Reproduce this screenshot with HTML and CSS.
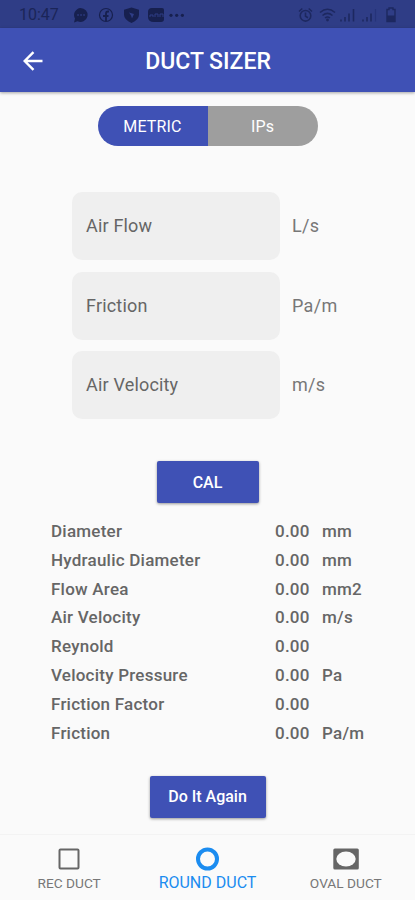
FILE: index.html
```html
<!DOCTYPE html>
<html lang="en">
<head>
    <meta charset="UTF-8">
    <meta name="viewport" content="width=device-width, initial-scale=1.0">
    <title>Duct Sizer</title>
    <link rel="stylesheet" href="styles.css">
</head>
<body>
    <div class="status-bar">
        <span class="clock">10:47</span>
        <svg class="status-left" width="114" height="20" viewBox="0 0 114 20">
            <path d="M7.500 3a7 7 0 1 1-3 13.300L1 17.500l1-4A7 7 0 0 1 7.500 3z" fill="#17204f"/>
            <path d="M4.300 10h1.500M7.300 10h1.500M10.300 10h1.500" stroke="#2f3d86" stroke-width="1.500"/>
            <circle cx="33" cy="10" r="6.500" fill="none" stroke="#17204f" stroke-width="1.200"/>
            <path d="M36 6.500h-1q-2 0-2 2V16M30 11h5.500" fill="none" stroke="#17204f" stroke-width="1.800"/>
            <path d="M58.500 2.500l7.500 2.300v5q0 5-7.500 8.200q-7.500-3.200-7.500-8.200v-5z" fill="#17204f"/>
            <path d="M56 7.500l5 1.500-2 4.500-1-3z" fill="#2f3d86"/>
            <path d="M79 3h10q2 0 2 2v9q0 3-3 3h-7q-6 0-6-5V7q0-4 4-4z" fill="#17204f"/>
            <path d="M77 12v-2h3v2M82 12V9h3v3M87 12V9h3v3" fill="none" stroke="#2f3d86"/>
            <circle cx="98" cy="10.300" r="1.600" fill="#17204f"/>
            <circle cx="103.700" cy="10.300" r="1.600" fill="#17204f"/>
            <circle cx="109.400" cy="10.300" r="1.600" fill="#17204f"/>
        </svg>
        <svg class="status-right" width="100" height="20" viewBox="0 0 100 20">
            <g fill="none" stroke="#1d2860" stroke-width="1.600">
                <circle cx="7.500" cy="10.800" r="5.300"/>
                <path d="M7.500 7.500v3.700l2.500 1.500M1 6.500l3.300-3M14 6.500l-3.300-3"/>
                <path d="M22 7.500q7.500-6.500 15 0M24.500 10.500q5-4.300 10 0M27 13q2.500-2 5 0"/>
            </g>
            <circle cx="29.500" cy="15" r="1.400" fill="#1d2860"/>
            <path d="M43 14.500v2M47 12v4.500M51 8.500v8M55.500 4v12.500M65 14.500v2M69 12v4.500M73 8.500v8" stroke="#1d2860" stroke-width="1.600"/>
            <path d="M77.500 4v12.500" stroke="#26337a" stroke-width="1.200"/>
            <path d="M89 4.500h2V3h4v1.500h2v12h-8z" fill="none" stroke="#1d2860" stroke-width="1.400"/>
            <path d="M89 10.500h8v6h-8z" fill="#1d2860"/>
        </svg>
    </div>

    <header class="app-bar">
        <svg class="back" width="20" height="20" viewBox="0 0 20 20">
            <path d="M19.500 10H2M10.500 1.200L1.700 10l8.800 8.800" fill="none" stroke="#fff" stroke-width="2.400"/>
        </svg>
        <h1>DUCT SIZER</h1>
    </header>

    <main>
        <div class="unit-toggle">
            <button class="unit active">METRIC</button>
            <button class="unit">IPs</button>
        </div>

        <div class="fields">
            <div class="field">
                <div class="input">Air Flow</div>
                <span class="field-unit">L/s</span>
            </div>
            <div class="field">
                <div class="input">Friction</div>
                <span class="field-unit">Pa/m</span>
            </div>
            <div class="field">
                <div class="input">Air Velocity</div>
                <span class="field-unit">m/s</span>
            </div>
        </div>

        <button class="action calculate">CAL</button>

        <div class="results">
            <span>Diameter</span><span>0.00</span><span>mm</span>
            <span>Hydraulic Diameter</span><span>0.00</span><span>mm</span>
            <span>Flow Area</span><span>0.00</span><span>mm2</span>
            <span>Air Velocity</span><span>0.00</span><span>m/s</span>
            <span>Reynold</span><span>0.00</span><span></span>
            <span>Velocity Pressure</span><span>0.00</span><span>Pa</span>
            <span>Friction Factor</span><span>0.00</span><span></span>
            <span>Friction</span><span>0.00</span><span>Pa/m</span>
        </div>

        <button class="action again">Do It Again</button>
    </main>

    <nav class="tabs">
        <div class="tab">
            <svg width="28" height="24" viewBox="0 0 28 24">
                <rect x="4.500" y="2.500" width="19" height="19" rx="1" fill="none" stroke="#666" stroke-width="2"/>
            </svg>
            <span>REC DUCT</span>
        </div>
        <div class="tab selected">
            <svg width="28" height="24" viewBox="0 0 28 24">
                <circle cx="14.500" cy="12" r="9.500" fill="none" stroke="#1b8cf0" stroke-width="4"/>
            </svg>
            <span>ROUND DUCT</span>
        </div>
        <div class="tab">
            <svg width="28" height="24" viewBox="0 0 28 24">
                <rect x="1.300" y="1.500" width="25.500" height="21" rx="1.500" fill="#666"/>
                <ellipse cx="14" cy="12" rx="9.700" ry="7.500" fill="#fafafa"/>
            </svg>
            <span>OVAL DUCT</span>
        </div>
    </nav>
</body>
</html>
```

FILE: styles.css
```css
* {
    box-sizing: border-box;
}

body {
    margin: 0;
    height: 900px;
    display: flex;
    flex-direction: column;
    overflow: hidden;
    background-color: #fafafa;
    color: #666;
    font-family: Roboto, "Liberation Sans", sans-serif;
}

button {
    border: none;
    padding: 0;
    color: white;
    font-family: inherit;
}

.status-bar {
    flex: none;
    display: flex;
    align-items: center;
    height: 28px;
    padding: 1px 17px 0 19px;
    background-color: #2f3d86;
}

.clock {
    width: 54px;
    color: #1b2558;
    font-size: 16px;
}

.status-right {
    margin-left: auto;
}

.app-bar {
    flex: none;
    display: grid;
    grid-template-columns: 20px 1fr 20px;
    align-items: center;
    height: 64px;
    padding: 0 22px 0 23px;
    background-color: #3f51b5;
    color: white;
    box-shadow: 0 1px 3px rgba(0, 0, 0, 0.35);
}

.back {
    margin-top: 1px;
}

.app-bar h1 {
    margin: 2px 0 0;
    text-align: center;
    font-size: 23px;
    font-weight: 500;
}

main {
    flex: 1;
    display: flex;
    flex-direction: column;
    align-items: center;
    padding-top: 14px;
}

.unit-toggle {
    display: flex;
    width: 220px;
    height: 40px;
    border-radius: 20px;
    overflow: hidden;
}

.unit {
    flex: 1;
    background-color: #9e9e9e;
    font-size: 16px;
    letter-spacing: 0.15px;
}

.unit.active {
    background-color: #3f51b5;
}

.fields {
    display: flex;
    flex-direction: column;
    gap: 11.5px;
    align-self: stretch;
    margin-top: 46px;
    padding-left: 72px;
}

.field {
    display: flex;
    align-items: center;
    gap: 12px;
}

.input {
    display: flex;
    align-items: center;
    width: 208px;
    height: 68px;
    padding: 0 0 1px 14px;
    border-radius: 10px;
    background-color: #efefef;
    font-size: 18px;
    letter-spacing: 0.18px;
}

.field-unit {
    padding-bottom: 1px;
    color: #777;
    font-size: 18px;
    letter-spacing: 0.3px;
}

.action {
    height: 42px;
    border-radius: 2px;
    background-color: #3f51b5;
    box-shadow: 0 1px 3px rgba(0, 0, 0, 0.4);
    font-size: 16px;
    font-weight: 500;
}

.calculate {
    width: 102px;
    margin-top: 42px;
}

.results {
    display: grid;
    grid-template-columns: 224px 47px 1fr;
    grid-auto-rows: 28.8px;
    align-items: center;
    align-self: stretch;
    margin-top: 13.6px;
    padding-left: 51px;
    font-size: 17px;
    font-weight: 500;
    letter-spacing: 0.23px;
}

.again {
    width: 116px;
    margin-top: 29px;
}

.tabs {
    flex: none;
    display: flex;
    height: 66px;
    border-top: 1px solid #f3f3f3;
}

.tab {
    flex: 1;
    display: flex;
    flex-direction: column;
    align-items: center;
    padding-top: 12px;
    color: #777;
    font-size: 13.7px;
    line-height: 25px;
}

.selected {
    color: #1b8cf0;
    font-size: 16px;
    line-height: 23px;
}
```
